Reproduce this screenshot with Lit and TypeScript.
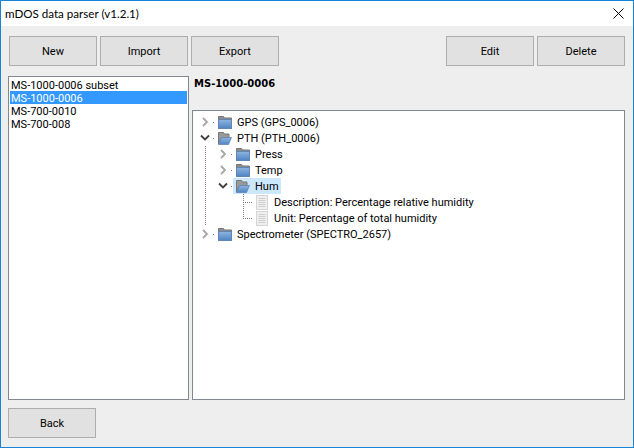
import { LitElement, html, css, svg } from "lit";
import { customElement } from "lit/decorators.js";

const chevron = (x: number, open: boolean) =>
  open
    ? svg`<path d="M${x} 5.5l4 4 4-4" fill="none" stroke="#404040" stroke-width="1.8"/>`
    : svg`<path d="M${x + 2} 4l4 4-4 4" fill="none" stroke="#a6a6a6" stroke-width="1.8"/>`;

const hDots = (x1: number, x2: number, y = 8.5) =>
  svg`<path d="M${x1} ${y}H${x2}" stroke="#808080" stroke-dasharray="1 1" fill="none"/>`;
const vDots = (x: number, y1: number, y2: number) =>
  svg`<path d="M${x + 0.5} ${y1}V${y2}" stroke="#808080" stroke-dasharray="1 1" fill="none"/>`;

const folderClosed = html`<svg class="ico" width="14" height="13" viewBox="0 0 14 13">
  <defs><linearGradient id="bl" x1="0" y1="0" x2="0" y2="1"><stop offset="0" stop-color="#8fb4e0"/><stop offset="1" stop-color="#4f84c4"/></linearGradient></defs>
  <path d="M0.5 0.5h5l1 1.5h7v9h-13z" fill="#8c8c8c" stroke="#777"/>
  <rect x="0.5" y="3.5" width="13" height="9" fill="url(#bl)" stroke="#5f86b4"/>
</svg>`;
const folderOpen = html`<svg class="ico" width="14" height="13" viewBox="0 0 14 13">
  <defs><linearGradient id="bl2" x1="0" y1="0" x2="0" y2="1"><stop offset="0" stop-color="#8fb4e0"/><stop offset="1" stop-color="#4f84c4"/></linearGradient></defs>
  <path d="M0.5 0.5h5l1 1.5h4.5v4h-8l-2.5 6z" fill="#9a9a9a" stroke="#777"/>
  <path d="M3.5 5.5h10l-3 7h-10z" fill="url(#bl2)" stroke="#5f86b4" stroke-width="0.8"/>
</svg>`;
const doc = html`<svg class="ico" width="12" height="15" viewBox="0 0 12 15">
  <rect x="0.5" y="0.5" width="11" height="14" fill="#efefef" stroke="#d6d6d6"/>
  <path d="M2.5 3.5h7M2.5 5.5h7M2.5 7.5h7M2.5 9.5h7M2.5 11.5h7" stroke="#cfcfcf"/>
</svg>`;

type Row = {
  label: string;
  level: 0 | 1 | 2;
  kind: "closed" | "open" | "leaf";
  trunk?: boolean;
  branch?: "mid" | "end";
  selected?: boolean;
};

const rows: Row[] = [
  { label: "GPS (GPS_0006)", level: 0, kind: "closed" },
  { label: "PTH (PTH_0006)", level: 0, kind: "open" },
  { label: "Press", level: 1, kind: "closed", trunk: true },
  { label: "Temp", level: 1, kind: "closed", trunk: true },
  { label: "Hum", level: 1, kind: "open", trunk: true, selected: true },
  { label: "Description: Percentage relative humidity", level: 2, kind: "leaf", trunk: true, branch: "mid" },
  { label: "Unit: Percentage of total humidity", level: 2, kind: "leaf", trunk: true, branch: "end" },
  { label: "Spectrometer (SPECTRO_2657)", level: 0, kind: "closed" },
];

const gutterWidth = [22, 40, 60];

@customElement("app-root")
export class AppRoot extends LitElement {
  static styles = css`
    :host {
      display: block;
      width: 634px;
      height: 448px;
      font-family: "Roboto", "Liberation Sans", sans-serif;
      font-size: 11px;
      color: #000;
    }
    .window {
      box-sizing: border-box;
      width: 634px;
      height: 448px;
      border: 1px solid #1883d7;
      background: #eeeeee;
      display: flex;
      flex-direction: column;
    }
    .titlebar {
      height: 25px;
      background: #fff;
      display: flex;
      align-items: center;
      justify-content: space-between;
      padding-left: 4px;
      font-family: "Lato", "Liberation Sans", sans-serif;
      font-size: 11.6px;
      flex: none;
    }
    .close {
      width: 30px;
      display: flex;
      justify-content: center;
    }
    .toolbar {
      display: flex;
      gap: 3px;
      padding: 10px 8px 0 8px;
      flex: none;
    }
    .spacer {
      flex: 1;
    }
    .btn {
      box-sizing: border-box;
      width: 88px;
      height: 30px;
      border: 1px solid #adadad;
      background: #e1e1e1;
      display: flex;
      align-items: center;
      justify-content: center;
      font: inherit;
      color: #000;
      padding: 0;
    }
    .main {
      display: flex;
      gap: 3px;
      padding: 10px 8px 0 7px;
      flex: none;
    }
    .list {
      box-sizing: border-box;
      width: 181px;
      height: 324px;
      background: #fff;
      border: 1px solid #828790;
      padding: 1px;
      flex: none;
    }
    .item {
      box-sizing: border-box;
      height: 13px;
      padding-top: 2px;
      line-height: 11px;
      padding-left: 1px;
      white-space: nowrap;
    }
    .item.sel {
      background: #3399ff;
      color: #fff;
    }
    .right {
      flex: 1;
      display: flex;
      flex-direction: column;
    }
    .heading {
      box-sizing: border-box;
      height: 34px;
      padding: 1px 0 0 2px;
      font-family: "DejaVu Sans", sans-serif;
      font-size: 10px;
      font-weight: 700;
      line-height: 14px;
    }
    .tree {
      box-sizing: border-box;
      height: 290px;
      background: #fff;
      border: 1px solid #828790;
      padding-top: 3px;
    }
    .row {
      display: flex;
      height: 16px;
      align-items: stretch;
    }
    .gutter {
      flex: none;
      display: block;
    }
    .node {
      display: flex;
      align-items: center;
      gap: 5px;
      padding: 0 2px 0 3px;
      white-space: nowrap;
    }
    .node.leaf {
      gap: 6px;
    }
    .node.sel {
      background: #cce8ff;
    }
    .ico {
      flex: none;
      display: block;
    }
    .footer {
      padding: 8px 7px 0;
      flex: none;
    }
  `;

  private gutter(r: Row) {
    const w = gutterWidth[r.level];
    return html`<svg class="gutter" width=${w} height="16" viewBox="0 0 ${w} 16">
      ${r.trunk ? vDots(12, 0, 16) : ""}
      ${r.level === 0 ? chevron(8, r.kind === "open") : ""}
      ${r.level === 0 ? hDots(20, 24) : ""}
      ${r.level === 1 ? chevron(26, r.kind === "open") : ""}
      ${r.level === 1 ? hDots(38, 41) : ""}
      ${r.level === 2 ? vDots(50, 0, r.branch === "end" ? 9 : 16) : ""}
      ${r.level === 2 ? hDots(50, 60) : ""}
    </svg>`;
  }

  render() {
    const icon = (r: Row) => (r.kind === "closed" ? folderClosed : r.kind === "open" ? folderOpen : doc);
    return html`<div class="window">
      <div class="titlebar">
        <span>mDOS data parser (v1.2.1)</span>
        <span class="close">
          <svg width="11" height="11" viewBox="0 0 11 11">
            <path d="M0.5 0.5l10 10M10.5 0.5l-10 10" stroke="#000" stroke-width="1" fill="none"/>
          </svg>
        </span>
      </div>
      <div class="toolbar">
        <button class="btn">New</button>
        <button class="btn">Import</button>
        <button class="btn">Export</button>
        <span class="spacer"></span>
        <button class="btn">Edit</button>
        <button class="btn">Delete</button>
      </div>
      <div class="main">
        <div class="list">
          <div class="item">MS-1000-0006 subset</div>
          <div class="item sel">MS-1000-0006</div>
          <div class="item">MS-700-0010</div>
          <div class="item">MS-700-008</div>
        </div>
        <div class="right">
          <div class="heading">MS-1000-0006</div>
          <div class="tree">
            ${rows.map(
              (r) => html`<div class="row">
                ${this.gutter(r)}
                <div class="node ${r.selected ? "sel" : ""} ${r.kind === "leaf" ? "leaf" : ""}">${icon(r)}<span>${r.label}</span></div>
              </div>`
            )}
          </div>
        </div>
      </div>
      <div class="footer"><button class="btn">Back</button></div>
    </div>`;
  }
}
